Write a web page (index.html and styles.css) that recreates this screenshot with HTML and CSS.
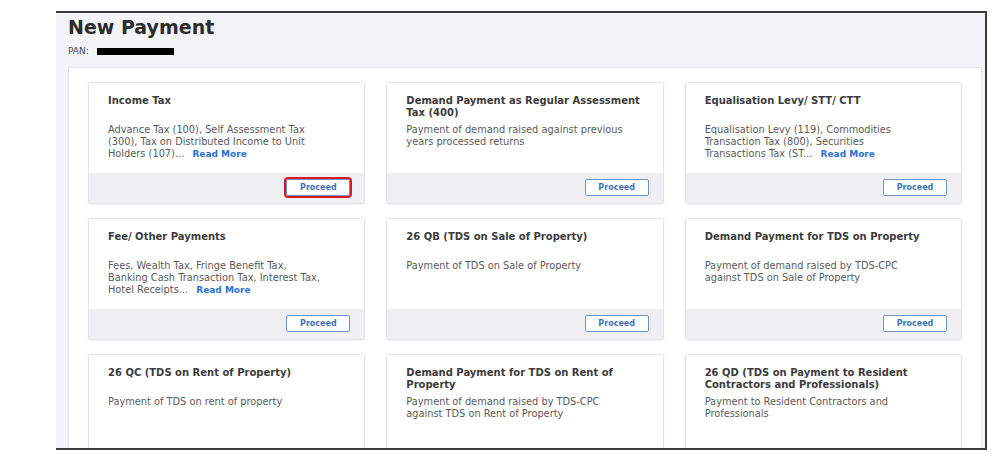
FILE: index.html
```html
<!DOCTYPE html>
<html lang="en">
<head>
<meta charset="utf-8">
<title>New Payment</title>
<link rel="stylesheet" href="styles.css">
</head>
<body>
<div class="frame">
  <h1 class="page-title">New Payment</h1>
  <div class="pan">PAN: <span class="redact"></span></div>
  <div class="panel">
    <div class="grid">
      <div class="card">
        <div class="card-body">
          <h2 class="card-title">Income Tax</h2>
          <p class="card-desc">Advance Tax (100), Self Assessment Tax (300), Tax on Distributed Income to Unit Holders (107)... <span class="read-more">Read More</span></p>
        </div>
        <div class="card-foot"><button class="btn btn-hl">Proceed</button></div>
      </div>
      <div class="card">
        <div class="card-body">
          <h2 class="card-title">Demand Payment as Regular Assessment Tax (400)</h2>
          <p class="card-desc">Payment of demand raised against previous years processed returns</p>
        </div>
        <div class="card-foot"><button class="btn">Proceed</button></div>
      </div>
      <div class="card">
        <div class="card-body">
          <h2 class="card-title">Equalisation Levy/ STT/ CTT</h2>
          <p class="card-desc">Equalisation Levy (119), Commodities Transaction Tax (800), Securities Transactions Tax (ST... <span class="read-more">Read More</span></p>
        </div>
        <div class="card-foot"><button class="btn">Proceed</button></div>
      </div>
      <div class="card">
        <div class="card-body">
          <h2 class="card-title">Fee/ Other Payments</h2>
          <p class="card-desc">Fees, Wealth Tax, Fringe Benefit Tax, Banking Cash Transaction Tax, Interest Tax, Hotel Receipts... <span class="read-more">Read More</span></p>
        </div>
        <div class="card-foot"><button class="btn">Proceed</button></div>
      </div>
      <div class="card">
        <div class="card-body">
          <h2 class="card-title">26 QB (TDS on Sale of Property)</h2>
          <p class="card-desc">Payment of TDS on Sale of Property</p>
        </div>
        <div class="card-foot"><button class="btn">Proceed</button></div>
      </div>
      <div class="card">
        <div class="card-body">
          <h2 class="card-title">Demand Payment for TDS on Property</h2>
          <p class="card-desc">Payment of demand raised by TDS-CPC against TDS on Sale of Property</p>
        </div>
        <div class="card-foot"><button class="btn">Proceed</button></div>
      </div>
      <div class="card">
        <div class="card-body">
          <h2 class="card-title">26 QC (TDS on Rent of Property)</h2>
          <p class="card-desc">Payment of TDS on rent of property</p>
        </div>
      </div>
      <div class="card">
        <div class="card-body">
          <h2 class="card-title">Demand Payment for TDS on Rent of Property</h2>
          <p class="card-desc">Payment of demand raised by TDS-CPC against TDS on Rent of Property</p>
        </div>
      </div>
      <div class="card">
        <div class="card-body">
          <h2 class="card-title">26 QD (TDS on Payment to Resident Contractors and Professionals)</h2>
          <p class="card-desc">Payment to Resident Contractors and Professionals</p>
        </div>
      </div>
    </div>
  </div>
</div>
</body>
</html>
```
FILE: styles.css
```css
html, body {
  margin: 0;
  padding: 0;
  background: #ffffff;
}

body {
  font-family: "DejaVu Sans", "Liberation Sans", sans-serif;
}

.frame {
  box-sizing: border-box;
  width: 931px;
  height: 439px;
  margin: 11px 0 0 56px;
  padding: 3px 3px 0 12px;
  background: #f3f4f8;
  border-top: 2px solid #3a3a3a;
  border-right: 2px solid #3a3a3a;
  border-bottom: 2px solid #3a3a3a;
  overflow: hidden;
}

.page-title {
  margin: 0;
  font-size: 19px;
  line-height: 22px;
  font-weight: bold;
  color: #2c2c2c;
}

.pan {
  margin-top: 7px;
  font-size: 9px;
  line-height: 12px;
  color: #4a4a4a;
  display: flex;
  align-items: center;
  gap: 8px;
}

.redact {
  display: inline-block;
  width: 77px;
  height: 7px;
  background: #000;
}

.panel {
  margin-top: 10px;
  background: #ffffff;
  border: 1px solid #e3e5ec;
  padding: 14px 19px 20px 19px;
}

.grid {
  display: grid;
  grid-template-columns: repeat(3, 1fr);
  column-gap: 21px;
  row-gap: 14px;
}

.card {
  min-height: 120px;
  border: 1px solid #e1e3e9;
  border-radius: 3px;
  background: #fff;
  box-shadow: 0 1px 2px rgba(0, 0, 0, 0.05);
  overflow: hidden;
}

.card-body {
  box-sizing: border-box;
  height: 90px;
  padding: 12px 12px 0 19px;
}

.card-title {
  margin: 0;
  font-size: 10px;
  line-height: 12px;
  min-height: 24px;
  font-weight: bold;
  color: #3b3b3b;
}

.card-desc {
  margin: 5px 0 0 0;
  max-width: 219px;
  font-size: 9.8px;
  line-height: 12px;
  color: #5a5a5a;
}

.read-more {
  margin-left: 5px;
  color: #2a70d6;
  font-weight: bold;
  font-size: 9px;
}

.card-foot {
  height: 30px;
  box-sizing: border-box;
  background: #efeff1;
  display: flex;
  justify-content: flex-end;
  align-items: flex-start;
  padding: 6px 14px 0 0;
}

.btn {
  width: 64px;
  height: 17px;
  padding: 0;
  border: 1px solid #6b93cc;
  border-radius: 2px;
  background: #ffffff;
  color: #3f72b9;
  font-family: "DejaVu Sans", sans-serif;
  font-size: 8px;
  font-weight: bold;
  line-height: 15px;
}

.btn-hl {
  outline: 2px solid #dc1820;
  outline-offset: 0;
}
```
